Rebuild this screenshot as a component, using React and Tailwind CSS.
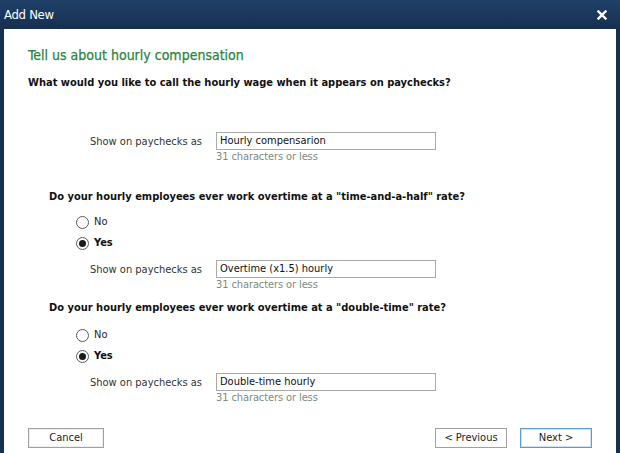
import React from "react";

const font = { fontFamily: '"DejaVu Sans Condensed", "DejaVu Sans", sans-serif' };

function Radio({ checked, label }) {
  return (
    <div className="flex items-center h-[21px]">
      <span className="w-[13px] h-[13px] rounded-full border border-[#5a5a5a] bg-white flex items-center justify-center">
        {checked && <span className="w-[7px] h-[7px] rounded-full bg-[#1a1a1a]" />}
      </span>
      <span className={`ml-[5px] text-[11px] ${checked ? "font-bold text-[#111]" : "text-[#222]"}`}>{label}</span>
    </div>
  );
}

function Field({ value, labelClass }) {
  return (
    <div className="flex">
      <div className={`text-[11px] text-[#333] text-right pt-[2px] ${labelClass}`}>Show on paychecks as</div>
      <div className="ml-[14px]">
        <div className="w-[220px] h-[18px] border border-[#a9a9a9] bg-white text-[11px] text-[#111] px-[3px] leading-[16px]">{value}</div>
        <div className="text-[11px] text-[#7d8a7d] leading-[13px] tracking-[-0.1px]">31 characters or less</div>
      </div>
    </div>
  );
}

const q = "text-[11px] font-bold text-[#111] leading-[14px]";

export default function App() {
  return (
    <div className="w-[620px] h-[453px] bg-[#18304f] flex flex-col" style={font}>
      <div className="h-[29px] flex items-center justify-between px-[4px] bg-gradient-to-b from-[#20416a] to-[#172f4f]">
        <span className="text-white text-[13px] tracking-[-0.3px]">Add New</span>
        <svg width="10" height="10" viewBox="0 0 10 10" className="mr-[9px]">
          <path d="M1.5 1.5 L8.5 8.5 M8.5 1.5 L1.5 8.5" stroke="#fff" strokeWidth="2.4" strokeLinecap="square" />
        </svg>
      </div>
      <div className="flex-1 mx-[4px] bg-white flex flex-col pl-[24px] pr-[24px]">
        <div className="mt-[17px] text-[14px] text-[#2a8540] leading-[18px] [-webkit-text-stroke:0.25px_#2a8540]">Tell us about hourly compensation</div>
        <div className={`mt-[12px] ${q}`}>What would you like to call the hourly wage when it appears on paychecks?</div>
        <div className="mt-[42px] ml-[43px]">
          <Field value="Hourly compensarion" labelClass="w-[131px]" />
        </div>
        <div className={`mt-[27px] ml-[21px] ${q}`}>Do your hourly employees ever work overtime at a "time-and-a-half" rate?</div>
        <div className="mt-[8px] ml-[48px]">
          <Radio label="No" />
          <Radio checked label="Yes" />
        </div>
        <div className="mt-[6px]">
          <Field value="Overtime (x1.5) hourly" labelClass="w-[174px]" />
        </div>
        <div className={`mt-[10px] ml-[21px] ${q}`}>Do your hourly employees ever work overtime at a "double-time" rate?</div>
        <div className="mt-[10px] ml-[48px]">
          <Radio label="No" />
          <Radio checked label="Yes" />
        </div>
        <div className="mt-[6px]">
          <Field value="Double-time hourly" labelClass="w-[174px]" />
        </div>
        <div className="mt-auto mb-[5px] flex items-center">
          <button className="w-[76px] h-[20px] border border-[#a0a0a0] bg-white text-[11px] text-[#222] shadow-[inset_0_0_0_1px_#f0f0f0]">Cancel</button>
          <div className="flex-1" />
          <button className="w-[72px] h-[20px] border border-[#a0a0a0] bg-white text-[11px] text-[#222]">&lt; Previous</button>
          <button className="ml-[13px] w-[72px] h-[20px] border border-[#5b9bd5] bg-white text-[11px] text-[#222] shadow-[inset_0_0_0_1px_#cfe3f7]">Next &gt;</button>
        </div>
      </div>
    </div>
  );
}
